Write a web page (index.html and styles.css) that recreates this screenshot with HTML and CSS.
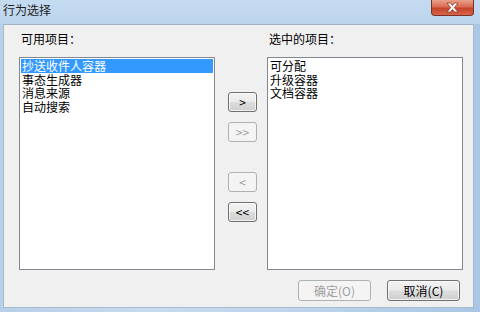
FILE: index.html
```html
<!DOCTYPE html>
<html lang="zh-CN">
<head>
  <meta charset="UTF-8">
  <title>行为选择</title>
  <link rel="stylesheet" href="styles.css">
</head>
<body>

<div class="window">
  <div class="titlebar">
    <span class="title">行为选择</span>
    <span class="close">
      <svg width="17" height="11" viewBox="0 0 17 11">
        <path d="M3 1 L6.5 1 L8.5 3.6 L10.5 1 L14 1 L10.3 5.5 L14 10 L10.5 10 L8.5 7.4 L6.5 10 L3 10 L6.7 5.5 Z" fill="#fff" stroke="#8a3a2c" stroke-width="0.8"/>
      </svg>
    </span>
  </div>

  <div class="client">
    <div class="columns">
      <div class="col">
        <div class="label">可用项目：</div>
        <div class="list">
          <div class="item selected">抄送收件人容器</div>
          <div class="item">事态生成器</div>
          <div class="item">消息来源</div>
          <div class="item">自动搜索</div>
        </div>
      </div>

      <div class="arrows">
        <button type="button" class="btn btn-small">&gt;</button>
        <button type="button" class="btn btn-small" disabled>&gt;&gt;</button>
        <button type="button" class="btn btn-small gap-big" disabled>&lt;</button>
        <button type="button" class="btn btn-small">&lt;&lt;</button>
      </div>

      <div class="col">
        <div class="label">选中的项目：</div>
        <div class="list">
          <div class="item">可分配</div>
          <div class="item">升级容器</div>
          <div class="item">文档容器</div>
        </div>
      </div>
    </div>

    <div class="footer">
      <button type="button" class="btn btn-wide" disabled>确定(O)</button>
      <button type="button" class="btn btn-wide">取消(C)</button>
    </div>
  </div>
</div>

</body>
</html>
```

FILE: styles.css
```css
html, body {
  margin: 0;
  padding: 0;
}
body {
  font-family: "Noto Sans CJK SC", "Liberation Sans", sans-serif;
  font-size: 12px;
  color: #000;
}
.window {
  width: 480px;
  height: 312px;
  display: flex;
  flex-direction: column;
  background: linear-gradient(90deg, #b7cfe8 0%, #c6dbef 30%, #bed5ec 60%, #a9c6e4 100%);
}
.titlebar {
  height: 24px;
  display: flex;
  justify-content: space-between;
  align-items: flex-start;
  padding: 0 6px 0 3px;
  background: linear-gradient(180deg, #c5dbf0 0%, #bcd4ec 100%);
}
.title {
  line-height: 18px;
  padding-top: 1px;
  color: #1e1e1e;
}
.close {
  width: 41px;
  height: 15px;
  display: flex;
  align-items: center;
  justify-content: center;
  border: 1px solid #7b3126;
  border-top: none;
  border-radius: 0 0 4px 4px;
  background: linear-gradient(180deg, #eaa08c 0%, #d86c52 45%, #c6432a 55%, #d5654a 100%);
}
.client {
  flex: 1;
  margin: 0 6px 4px 3px;
  background: #f0f0f0;
  border: 1px solid #a7b9cd;
  border-top-color: #9fb2c7;
  display: flex;
  flex-direction: column;
  padding: 0 10px 0 15px;
}
.columns {
  display: flex;
  align-items: flex-start;
}
.col {
  width: 196px;
  display: flex;
  flex-direction: column;
}
.label {
  height: 16px;
  line-height: 16px;
  padding: 6px 0 10px 2px;
}
.list {
  height: 209px;
  background: #fff;
  border: 1px solid #828790;
  padding: 1px;
}
.item {
  height: 13.5px;
  line-height: 13.5px;
  padding-left: 1px;
  white-space: nowrap;
}
.item.selected {
  background: #3399ff;
  color: #fff;
}
.arrows {
  width: 29px;
  margin: 0 10px 0 13px;
  padding-top: 67px;
  display: flex;
  flex-direction: column;
  gap: 10px;
}
.btn {
  font-family: inherit;
  font-size: 12px;
  color: #000;
  padding: 0;
  border: 1px solid #707070;
  border-radius: 3px;
  background: linear-gradient(180deg, #f2f2f2 0%, #ebebeb 48%, #dddddd 52%, #cfcfcf 100%);
  box-shadow: inset 0 0 0 1px rgba(255,255,255,0.7);
}
.btn:disabled {
  color: #a0a0a0;
  border-color: #adb2b5;
  background: #f4f4f4;
  box-shadow: none;
}
.btn-small {
  width: 29px;
  height: 20px;
  line-height: 16px;
}
.gap-big {
  margin-top: 20px;
}
.footer {
  display: flex;
  justify-content: flex-end;
  gap: 16px;
  padding: 10px 3px 0 0;
}
.btn-wide {
  width: 73px;
  height: 21px;
}
```
